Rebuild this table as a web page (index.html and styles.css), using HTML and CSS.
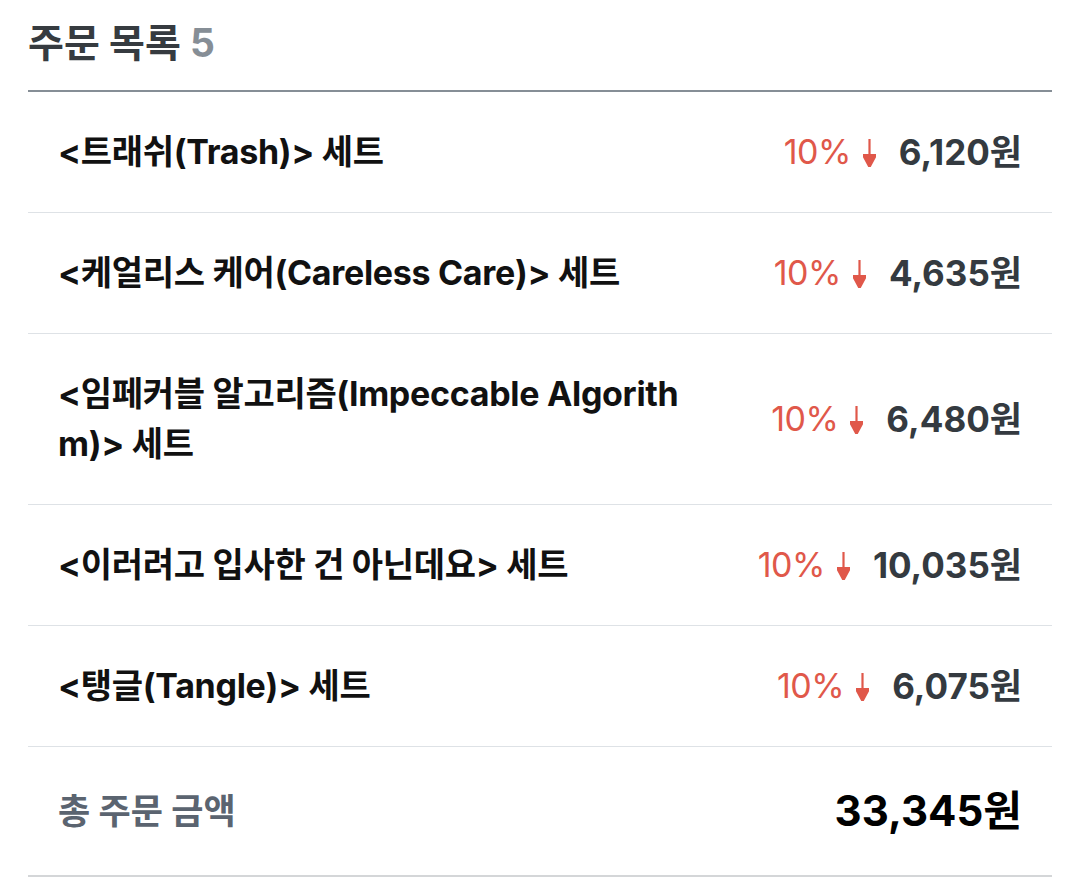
FILE: index.html
```html
<!DOCTYPE html>
<html lang="ko">
<head>
<meta charset="utf-8">
<link rel="stylesheet" href="styles.css">
</head>
<body>
<section class="orders">
  <h2 class="title">주문 목록 <span class="count">5</span></h2>
  <ul class="list">
    <li class="row">
      <span class="name">&lt;트래쉬(Trash)&gt; 세트</span>
      <span class="price-box">
        <span class="discount">10%<svg class="arrow" viewBox="0 0 13 28"><line x1="6.5" y1="0" x2="6.5" y2="18" /><polygon points="0,16 13,16 6.5,28" /></svg></span>
        <span class="price">6,120원</span>
      </span>
    </li>
    <li class="row">
      <span class="name">&lt;케얼리스 케어(Careless Care)&gt; 세트</span>
      <span class="price-box">
        <span class="discount">10%<svg class="arrow" viewBox="0 0 13 28"><line x1="6.5" y1="0" x2="6.5" y2="18" /><polygon points="0,16 13,16 6.5,28" /></svg></span>
        <span class="price">4,635원</span>
      </span>
    </li>
    <li class="row">
      <span class="name">&lt;임페커블 알고리즘(Impeccable Algorithm)&gt; 세트</span>
      <span class="price-box">
        <span class="discount">10%<svg class="arrow" viewBox="0 0 13 28"><line x1="6.5" y1="0" x2="6.5" y2="18" /><polygon points="0,16 13,16 6.5,28" /></svg></span>
        <span class="price">6,480원</span>
      </span>
    </li>
    <li class="row">
      <span class="name">&lt;이러려고 입사한 건 아닌데요&gt; 세트</span>
      <span class="price-box">
        <span class="discount">10%<svg class="arrow" viewBox="0 0 13 28"><line x1="6.5" y1="0" x2="6.5" y2="18" /><polygon points="0,16 13,16 6.5,28" /></svg></span>
        <span class="price">10,035원</span>
      </span>
    </li>
    <li class="row">
      <span class="name">&lt;탱글(Tangle)&gt; 세트</span>
      <span class="price-box">
        <span class="discount">10%<svg class="arrow" viewBox="0 0 13 28"><line x1="6.5" y1="0" x2="6.5" y2="18" /><polygon points="0,16 13,16 6.5,28" /></svg></span>
        <span class="price">6,075원</span>
      </span>
    </li>
    <li class="row total">
      <span class="total-label">총 주문 금액</span>
      <span class="total-price">33,345원</span>
    </li>
  </ul>
</section>
</body>
</html>
```

FILE: styles.css
```css
* { box-sizing: border-box; }
html, body {
  margin: 0;
  padding: 0;
  background: #ffffff;
}
body {
  font-family: Inter, "Noto Sans CJK KR", sans-serif;
  color: #111;
}
.orders {
  padding: 16px 28px 0 28px;
}
.title {
  margin: 0;
  padding-bottom: 20px;
  font-size: 39px;
  font-weight: 700;
  line-height: 54px;
  color: #363b40;
  border-bottom: 2px solid #868e96;
}
.count {
  color: #868e96;
}
.list {
  list-style: none;
  margin: 0;
  padding: 0;
}
.row {
  display: flex;
  justify-content: space-between;
  align-items: center;
  padding: 35px 30px;
  border-bottom: 1px solid #dee2e6;
  gap: 40px;
}
.name {
  font-size: 34px;
  font-weight: 700;
  line-height: 50px;
  color: #111;
  letter-spacing: -0.3px;
  max-width: 625px;
  word-break: break-all;
}
.price-box {
  display: flex;
  align-items: center;
  white-space: nowrap;
  flex-shrink: 0;
  line-height: 50px;
}
.discount {
  display: flex;
  align-items: center;
  font-size: 34px;
  font-weight: 400;
  color: #e0584a;
  letter-spacing: -0.5px;
}
.arrow {
  width: 13px;
  height: 28px;
  margin-left: 12px;
  margin-top: 2px;
  fill: #e0584a;
  stroke: #e0584a;
  stroke-width: 2.2;
}
.price {
  margin-left: 23px;
  font-size: 35px;
  font-weight: 700;
  color: #343a40;
}
.total {
  padding-top: 39px;
  padding-bottom: 39px;
  border-bottom: 2px solid #d4d6d8;
}
.total-label {
  font-size: 35px;
  font-weight: 700;
  line-height: 50px;
  color: #5b6470;
}
.total-price {
  font-size: 42px;
  font-weight: 700;
  line-height: 50px;
  color: #000;
}
```
